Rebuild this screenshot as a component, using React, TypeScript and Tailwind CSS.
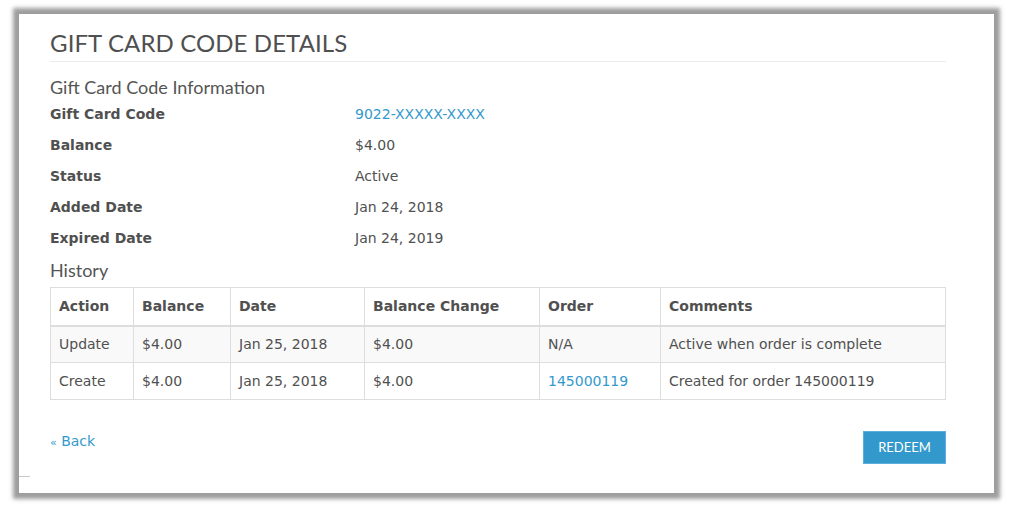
const rows = [
  { label: 'Gift Card Code', value: '9022-XXXXX-XXXX', link: true },
  { label: 'Balance', value: '$4.00' },
  { label: 'Status', value: 'Active' },
  { label: 'Added Date', value: 'Jan 24, 2018' },
  { label: 'Expired Date', value: 'Jan 24, 2019' },
]

const history = [
  { action: 'Update', balance: '$4.00', date: 'Jan 25, 2018', change: '$4.00', order: 'N/A', comments: 'Active when order is complete' },
  { action: 'Create', balance: '$4.00', date: 'Jan 25, 2018', change: '$4.00', order: '145000119', orderLink: true, comments: 'Created for order 145000119' },
]

const cols = ['w-[83px]', 'w-[97px]', 'w-[134px]', 'w-[175px]', 'w-[121px]', '']

export default function App() {
  return (
    <div className="w-[1014px] h-[508px] bg-white pt-[14px] pl-[19px]">
      <div className="w-[975px] h-[479px] bg-white shadow-[0_0_4px_6px_rgba(140,140,140,0.85)] flex flex-col px-[31px] pt-[16px] text-[#505050] font-['DejaVu_Sans',sans-serif] text-[14px]">
        <h1 className="font-['Lato',sans-serif] text-[24px] leading-[26px] text-[#4f4f4f] tracking-[0.1px] pb-[5px] border-b border-[#ebebeb] w-[896px]">
          GIFT CARD CODE DETAILS
        </h1>

        <h2 className="font-['Lato',sans-serif] text-[18px] leading-[20px] mt-[15px] text-[#555]">Gift Card Code Information</h2>
        <div className="flex flex-col mt-[2px]">
          {rows.map(r => (
            <div key={r.label} className="flex h-[31px] items-center">
              <div className="w-[305px] font-bold">{r.label}</div>
              <div className={r.link ? 'text-[#3399cc]' : ''}>{r.value}</div>
            </div>
          ))}
        </div>

        <h2 className="font-['Lato',sans-serif] text-[18px] leading-[20px] mt-[6px] text-[#555]">History</h2>
        <table className="w-[896px] mt-[7px] border-collapse border border-[#ddd]">
          <thead>
            <tr className="h-[38px]">
              {['Action', 'Balance', 'Date', 'Balance Change', 'Order', 'Comments'].map((h, i) => (
                <th key={h} className={`${cols[i]} text-left font-bold px-[8px] border border-[#ddd] border-b-2`}>{h}</th>
              ))}
            </tr>
          </thead>
          <tbody>
            {history.map((h, i) => (
              <tr key={h.action} className={`h-[37px] ${i === 0 ? 'bg-[#f9f9f9]' : 'bg-white'}`}>
                <td className="px-[8px] border border-[#ddd]">{h.action}</td>
                <td className="px-[8px] border border-[#ddd]">{h.balance}</td>
                <td className="px-[8px] border border-[#ddd]">{h.date}</td>
                <td className="px-[8px] border border-[#ddd]">{h.change}</td>
                <td className={`px-[8px] border border-[#ddd] ${h.orderLink ? 'text-[#3399cc]' : ''}`}>{h.order}</td>
                <td className="px-[8px] border border-[#ddd]">{h.comments}</td>
              </tr>
            ))}
          </tbody>
        </table>

        <div className="flex justify-between w-[896px] mt-[31px]">
          <a className="text-[#3399cc] text-[14px]">
            <span className="text-[11px]">«</span> Back
          </a>
          <button className="bg-[#3399cc] text-white font-['Lato',sans-serif] text-[13px] w-[83px] h-[33px] border border-[#5ab0dc]">
            REDEEM
          </button>
        </div>
        <div className="-ml-[31px] mt-[12px] w-[11px] h-px bg-[#c8c8c8]" />
      </div>
    </div>
  )
}
